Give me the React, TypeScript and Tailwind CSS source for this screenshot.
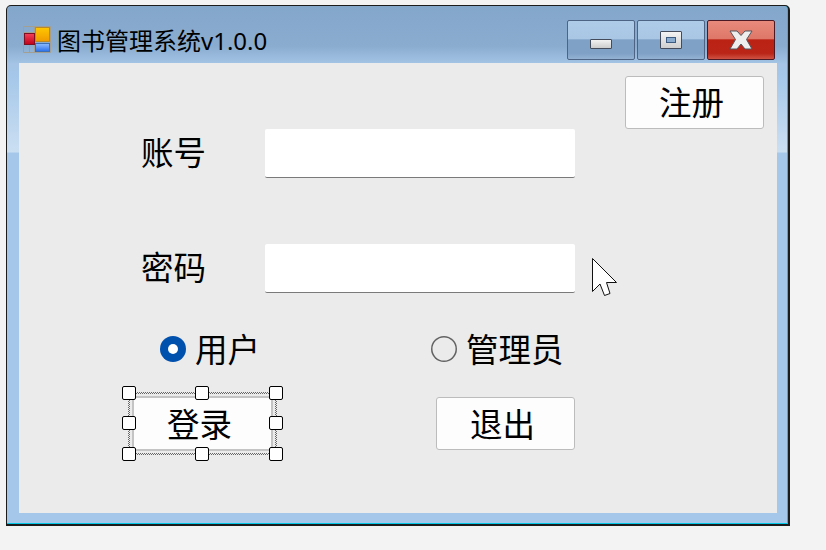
const font = "font-['Noto_Sans','Noto_Sans_CJK_SC',sans-serif]";

function AppIcon() {
  return (
    <svg width="28" height="27" viewBox="0 0 28 27" className="shrink-0">
      <path d="M0.5 0.5H27.5V26.5H0.5Z M11.5 0.5V26.5 M0.5 6.5H11.5 M0.5 18.5H11.5 M6.5 18.5V26.5" fill="none" stroke="#a39f93" />
      <defs>
        <linearGradient id="orange" x1="0" y1="0" x2="0" y2="1">
          <stop offset="0" stopColor="#ffc800" />
          <stop offset="1" stopColor="#f09a00" />
        </linearGradient>
        <linearGradient id="blue" x1="0" y1="0" x2="0" y2="1">
          <stop offset="0" stopColor="#8fbcff" />
          <stop offset="1" stopColor="#2a70ec" />
        </linearGradient>
        <linearGradient id="red" x1="0" y1="0" x2="0" y2="1">
          <stop offset="0" stopColor="#f5405a" />
          <stop offset="1" stopColor="#c00018" />
        </linearGradient>
      </defs>
      <rect x="12.5" y="1.5" width="14" height="14" fill="url(#orange)" stroke="#b98a2a" />
      <rect x="12.5" y="17.5" width="14" height="8" fill="url(#blue)" stroke="#3d6fb5" />
      <rect x="1.5" y="7.5" width="10" height="11" fill="url(#red)" stroke="#7d1022" />
    </svg>
  );
}

function CaptionButton({ kind }: { kind: "min" | "max" | "close" }) {
  if (kind === "close") {
    return (
      <div className="w-[68px] h-10 rounded-[2px] border border-[#4c1a24] bg-[linear-gradient(#e88a7c_0%,#de7768_48%,#bb2214_49%,#ba2517_85%,#cf5242_100%)] flex items-center justify-center">
        <svg width="24" height="20" viewBox="0 0 24 20">
          <path
            d="M1 1H8L12 5.5L16 1H23L17.5 9.5L23 19H16L12 14L8 19H1L6.5 9.5Z"
            fill="#eeeeee"
            stroke="#55555c"
            strokeWidth="1"
          />
        </svg>
      </div>
    );
  }
  return (
    <div className="w-[68px] h-10 rounded-[2px] border border-[#4d6484] bg-[linear-gradient(#aecbe8_0%,#a9c6e4_48%,#7fa1c5_49%,#7fa1c5_85%,#94b3d4_100%)] flex justify-center">
      {kind === "min" ? (
        <div className="mt-[18px] w-[22px] h-[10px] rounded-[1px] border border-[#444c5c] bg-[linear-gradient(#f2f2f2,#cccccc)]" />
      ) : (
        <div className="mt-[10px] w-[22px] h-[18px] rounded-[1px] border border-[#444c5c] bg-[linear-gradient(#f4f4f4,#cfcfcf)] flex items-center justify-center">
          <div className="w-[10px] h-[6px] border border-[#3d5a80] bg-[#8aaccf]" />
        </div>
      )}
    </div>
  );
}

function Field({ label }: { label: string }) {
  return (
    <div className="flex items-center h-[49px] pl-[122px]">
      <span className="w-[124px] text-[32.5px] leading-none text-black">{label}</span>
      <div className="w-[310px] h-[49px] rounded-[2px] bg-white border-b border-[#7a7a7a]" />
    </div>
  );
}

function Radio({ label, checked }: { label: string; checked?: boolean }) {
  return (
    <div className="flex items-center gap-[9px]">
      {checked ? (
        <div className="w-[26px] h-[26px] rounded-full bg-[#0050ae] flex items-center justify-center">
          <div className="w-[10px] h-[10px] rounded-full bg-white" />
        </div>
      ) : (
        <div className="w-[26px] h-[26px] rounded-full shadow-[inset_0_0_0_1.5px_#636363]" />
      )}
      <span className="pt-[2px] text-[32.5px] leading-none text-black">{label}</span>
    </div>
  );
}

function Handle({ className }: { className: string }) {
  return <div className={`absolute w-[14px] h-[14px] rounded-[2px] border border-black bg-white ${className}`} />;
}

export default function App() {
  return (
    <div className={`w-[826px] h-[550px] bg-[#f3f3f3] overflow-hidden pt-[5px] pl-[6px] ${font}`}>
      {/* 窗口 */}
      <div className="w-[784px] h-[521px] rounded-t-[5px] border border-[#1c1c1c] border-b-2 border-r-2 shadow-[inset_-1px_-1px_0_#00c8e6] bg-[linear-gradient(#83a6cb_0px,#8aaccf_40px,#a5c4e6_58px,#a5c7e9_70px,#cbdff2_146px,#a5c8ea_147px,#a5c8ea_100%)] pl-3">
        <div className="h-[57px] flex items-start justify-between pr-[13px]">
          <div className="flex items-center gap-[6px] pl-[4px] pt-[20px]">
            <AppIcon />
            <span className="pt-[2px] text-[24px] leading-none text-black whitespace-nowrap">图书管理系统v1.0.0</span>
          </div>
          <div className="flex gap-[2px] pt-[14px]">
            <CaptionButton kind="min" />
            <CaptionButton kind="max" />
            <CaptionButton kind="close" />
          </div>
        </div>

        {/* 窗体 */}
        <div className="relative w-[758px] h-[450px] bg-[#ebebeb]">
          <div className="flex justify-end pt-[13px] pr-[13px]">
            <button className="w-[139px] h-[53px] pr-[6px] pt-[2px] rounded-[3px] border border-[#bcbcbc] bg-[#fdfdfd] text-[32.5px] leading-none text-black">
              注册
            </button>
          </div>
          <Field label="账号" />
          <div className="h-[66px]" />
          <Field label="密码" />
          <div className="flex items-center h-[26px] mt-[43px] pl-[141px]">
            <div className="w-[271px]">
              <Radio label="用户" checked />
            </div>
            <Radio label="管理员" />
          </div>
          <div className="flex items-center mt-[30px] pl-[109px]">
            {/* 设计器选中框 */}
            <div className="relative w-[149px] h-[63px] p-[2px] bg-[repeating-conic-gradient(#666666_0_25%,#eeeeee_0_50%)] bg-[length:2px_2px]">
              <div className="w-full h-full p-[2px] bg-[#ebebeb]">
                <button className="w-full h-full pr-[6px] pt-[4px] rounded-[2px] border-2 border-[#c4c4c4] bg-[#fdfdfd] text-[32.5px] leading-none text-black">
                  登录
                </button>
              </div>
              <Handle className="-left-[6px] -top-[6px]" />
              <Handle className="left-[67px] -top-[6px]" />
              <Handle className="left-[141px] -top-[6px]" />
              <Handle className="-left-[6px] top-[24px]" />
              <Handle className="left-[141px] top-[24px]" />
              <Handle className="-left-[6px] top-[55px]" />
              <Handle className="left-[67px] top-[55px]" />
              <Handle className="left-[141px] top-[55px]" />
            </div>
            <button className="ml-[159px] w-[139px] h-[53px] pr-[6px] pt-[4px] rounded-[3px] border border-[#bcbcbc] bg-[#fdfdfd] text-[32.5px] leading-none text-black">
              退出
            </button>
          </div>

          {/* 鼠标指针 */}
          <svg width="26" height="39" viewBox="0 0 26 39" className="absolute left-[573px] top-[195px]">
            <path d="M0.5 0.5L24.5 24.5H14.5L18 35.5L12.5 37.5L8 26L0.5 33.5Z" fill="#ffffff" stroke="#111111" strokeWidth="1" />
          </svg>
        </div>
      </div>
    </div>
  );
}
